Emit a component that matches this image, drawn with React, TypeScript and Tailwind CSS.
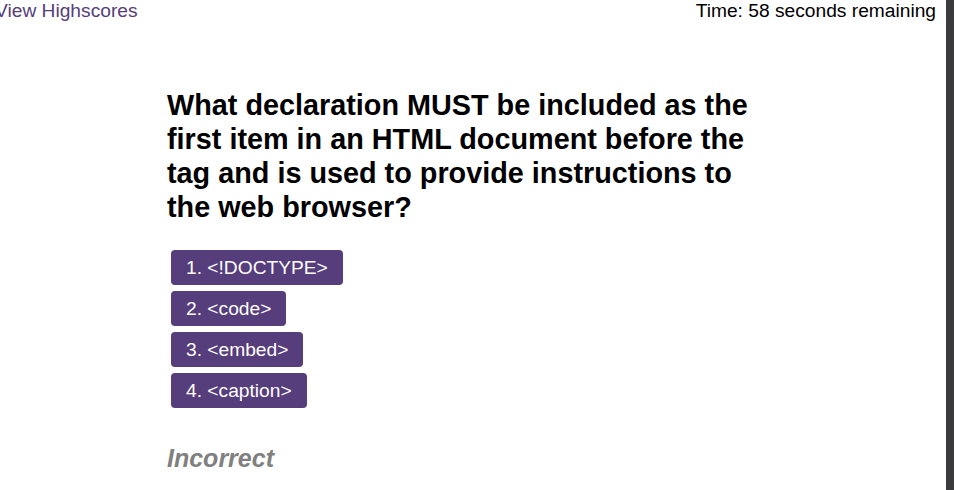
import React from "react";

const ANSWERS = ["1. <!DOCTYPE>", "2. <code>", "3. <embed>", "4. <caption>"];

const App = () => {
  return (
    <div className="flex h-[490px] w-full bg-white font-['Liberation_Sans',Arial,sans-serif]">
      <div className="flex-1 overflow-hidden">
        <header className="flex items-start justify-between pr-[10px] text-[19.2px] leading-[21px]">
          <a className="-ml-[5px] text-[#563d7c]">View Highscores</a>
          <span className="text-black">Time: 58 seconds remaining</span>
        </header>
        <main className="mx-auto mt-[67px] w-[612px]">
          <h1 className="w-[600px] text-[28.8px] font-bold leading-[34px] text-black">
            What declaration MUST be included as the first item in an HTML document before the tag and is used to
            provide instructions to the web browser?
          </h1>
          <div className="mt-[26px] flex flex-col items-start gap-[6px] pl-[4px]">
            {ANSWERS.map((a) => (
              <button
                key={a}
                className="h-[35px] rounded-[4px] bg-[#563d7c] px-[15px] text-[19.2px] leading-[35px] text-white"
              >
                {a}
              </button>
            ))}
          </div>
          <p className="mt-[36px] text-[25px] font-bold italic leading-[29px] text-[#808080]">Incorrect</p>
        </main>
      </div>
      <div className="w-[8px] bg-[#3b3a3c]" />
    </div>
  );
};

export default App;
